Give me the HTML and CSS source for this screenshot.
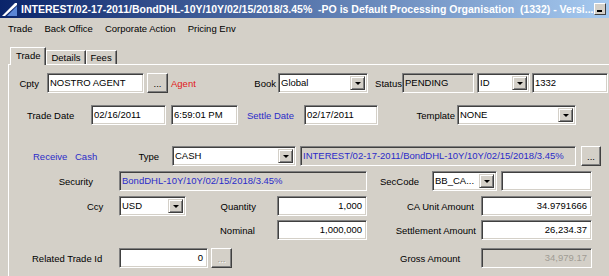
FILE: index.html
```html
<!DOCTYPE html>
<html lang="en">
<head>
  <meta charset="UTF-8">
  <title>Trade</title>
  <link rel="stylesheet" href="styles.css">
</head>
<body>
  <div class="titlebar">
    <svg class="app-icon" width="15" height="14" viewBox="0 0 15 14">
      <polygon points="0,14 13,1 15,1 15,3 3,14" fill="#ffffff"/>
      <polygon points="5,14 15,4 15,14" fill="#5b86d6"/>
    </svg>
    <span class="title-text">INTEREST/02-17-2011/BondDHL-10Y/10Y/02/15/2018/3.45%&nbsp;&nbsp;-PO is Default Processing Organisation&nbsp;&nbsp;(1332) - Versi...</span>
    <span class="min-btn"></span>
  </div>

  <div class="menubar">
    <span>Trade</span>
    <span>Back Office</span>
    <span>Corporate Action</span>
    <span>Pricing Env</span>
  </div>

  <div class="tabstrip">
    <div class="tab active">Trade</div>
    <div class="tab">Details</div>
    <div class="tab">Fees</div>
  </div>

  <div class="panel">
    <!-- counterparty / book / status -->
    <div class="row r1">
      <span class="lbl l-cpty">Cpty</span>
      <div class="field f-cpty">NOSTRO AGENT</div>
      <div class="btn b-cpty">...</div>
      <span class="lbl l-agent red">Agent</span>
      <span class="lbl l-book">Book</span>
      <div class="field combo f-book">Global<span class="arrow"></span></div>
      <span class="lbl l-status">Status</span>
      <div class="field grey f-status">PENDING</div>
      <div class="field combo f-idtype">ID<span class="arrow"></span></div>
      <div class="field f-id">1332</div>
    </div>

    <!-- dates -->
    <div class="row r2">
      <span class="lbl l-tdate">Trade Date</span>
      <div class="field f-tdate">02/16/2011</div>
      <div class="field f-time">6:59:01 PM</div>
      <span class="lbl l-sdate blue">Settle Date</span>
      <div class="field f-sdate">02/17/2011</div>
      <span class="lbl l-template">Template</span>
      <div class="field combo f-template">NONE<span class="arrow"></span></div>
    </div>

    <!-- type / product -->
    <div class="row r3">
      <span class="lbl l-receive blue">Receive</span>
      <span class="lbl l-cash blue">Cash</span>
      <span class="lbl l-type">Type</span>
      <div class="field combo f-type">CASH<span class="arrow"></span></div>
      <div class="field grey blue f-product">INTEREST/02-17-2011/BondDHL-10Y/10Y/02/15/2018/3.45%</div>
      <div class="btn b-product">...</div>
    </div>

    <div class="row r4">
      <span class="lbl l-security">Security</span>
      <div class="field grey blue f-security">BondDHL-10Y/10Y/02/15/2018/3.45%</div>
      <span class="lbl l-seccode">SecCode</span>
      <div class="field combo f-seccode">BB_CA...<span class="arrow"></span></div>
      <div class="field f-secval"></div>
    </div>

    <!-- amounts -->
    <div class="row r5">
      <span class="lbl l-ccy">Ccy</span>
      <div class="field combo f-ccy">USD<span class="arrow"></span></div>
      <span class="lbl l-qty">Quantity</span>
      <div class="field num f-qty">1,000</div>
      <span class="lbl l-caunit">CA Unit Amount</span>
      <div class="field num f-caunit">34.9791666</div>
    </div>

    <div class="row r6">
      <span class="lbl l-nominal">Nominal</span>
      <div class="field num f-nominal">1,000,000</div>
      <span class="lbl l-settle">Settlement Amount</span>
      <div class="field num f-settle">26,234.37</div>
    </div>

    <div class="row r7">
      <span class="lbl l-related">Related Trade Id</span>
      <div class="field num f-related">0</div>
      <div class="btn disabled b-related">...</div>
      <span class="lbl l-gross">Gross Amount</span>
      <div class="field grey num disabled f-gross">34,979.17</div>
    </div>
  </div>
</body>
</html>
```

FILE: styles.css
```css
body {
  margin: 0;
  background-color: #d4d0c8;
  font-family: "Liberation Sans", Arial, sans-serif;
  font-size: 9.5px;
  color: #000;
  overflow: hidden;
}

/* window chrome */
.titlebar {
  display: flex;
  align-items: center;
  height: 18px;
  padding-left: 2px;
  background: linear-gradient(to right, #0a246a, #a6caf0);
  color: #fff;
  font-size: 10.5px;
  font-weight: bold;
}
.app-icon {
  flex: none;
  margin-right: 4px;
}
.title-text {
  flex: none;
  white-space: nowrap;
}
.min-btn {
  flex: none;
  position: relative;
  width: 12px;
  height: 12px;
  margin: 0 3px 0 auto;
  background: #d4d0c8;
  box-sizing: border-box;
  border: 1px solid;
  border-color: #fff #404040 #404040 #fff;
}
.min-btn::after {
  content: "";
  position: absolute;
  left: 2px;
  bottom: 2px;
  width: 5px;
  height: 2px;
  background: #000;
}

.menubar {
  display: flex;
  gap: 12px;
  height: 20px;
  align-items: center;
  padding-left: 8px;
}

/* tabs */
.tabstrip {
  display: flex;
  align-items: flex-end;
  height: 26px;
  padding-left: 10px;
}
.tab {
  height: 13px;
  line-height: 13px;
  padding: 0 4px;
  border-top: 1px solid #fff;
  border-left: 1px solid #fff;
  border-right: 1px solid #404040;
  box-shadow: inset -1px 0 0 #808080;
}
.tab.active {
  position: relative;
  height: 17px;
  line-height: 15px;
  margin-bottom: -1px;
  padding: 0 5px;
  background: #d4d0c8;
  z-index: 1;
}

.panel {
  margin-left: 8px;
  height: 220px;
  border-top: 1px solid #fff;
  border-left: 1px solid #fff;
}

/* form rows */
.row {
  display: flex;
  align-items: center;
  height: 20px;
}
.r1 { margin-top: 8px; }
.r2 { margin-top: 12px; }
.r3 { margin-top: 21px; }
.r4 { margin-top: 5px; }
.r5 { margin-top: 5px; }
.r6 { margin-top: 4px; }
.r7 { margin-top: 8px; }

.lbl {
  flex: none;
  white-space: nowrap;
  text-align: right;
}
.red { color: #e01818; }
.blue { color: #2b2bc8; }

.field {
  flex: none;
  position: relative;
  box-sizing: border-box;
  height: 20px;
  line-height: 18px;
  padding-left: 2px;
  background: #fff;
  border: 1px solid;
  border-color: #808080 #fff #fff #808080;
  box-shadow: inset 1px 1px 0 #404040, inset -1px -1px 0 #d4d0c8;
  white-space: nowrap;
  overflow: hidden;
}
.field.grey { background: #d4d0c8; }
.field.num {
  text-align: right;
  padding-right: 4px;
}
.field.disabled { color: #a09c94; }

.combo .arrow {
  position: absolute;
  top: 2px;
  right: 2px;
  width: 15px;
  height: 14px;
  box-sizing: border-box;
  background: #d4d0c8;
  border: 1px solid;
  border-color: #d4d0c8 #404040 #404040 #d4d0c8;
  box-shadow: inset 1px 1px 0 #fff, inset -1px -1px 0 #808080;
}
.combo .arrow::after {
  content: "";
  position: absolute;
  left: 4px;
  top: 5px;
  border-left: 3px solid transparent;
  border-right: 3px solid transparent;
  border-top: 3px solid #000;
}

.btn {
  flex: none;
  box-sizing: border-box;
  width: 21px;
  height: 20px;
  line-height: 19px;
  text-align: center;
  background: #d4d0c8;
  border: 1px solid;
  border-color: #fff #404040 #404040 #fff;
  box-shadow: inset -1px -1px 0 #808080;
}
.btn.disabled {
  color: #a09c94;
  text-shadow: 1px 1px 0 #fff;
}

/* row 1 */
.l-cpty { width: 20px; margin-left: 10px; }
.f-cpty { width: 97px; margin-left: 8px; }
.b-cpty { margin-left: 3px; }
.l-agent { width: 30px; margin-left: 3px; text-align: left; }
.l-book { width: 22px; margin-left: 53px; }
.f-book { width: 90px; margin-left: 2px; }
.l-status { width: 28px; margin-left: 6px; }
.f-status { width: 72px; }
.f-idtype { width: 53px; margin-left: 3px; }
.f-id { width: 76px; margin-left: 2px; }

/* row 2 */
.l-tdate { width: 47px; margin-left: 18px; }
.f-tdate { width: 75px; margin-left: 17px; }
.f-time { width: 67px; margin-left: 5px; }
.l-sdate { width: 47px; margin-left: 9px; }
.f-sdate { width: 74px; margin-left: 10px; }
.l-template { width: 45px; margin-left: 32px; }
.f-template { width: 119px; margin-left: 2px; }

/* row 3 */
.l-receive { width: 34px; margin-left: 24px; text-align: left; }
.l-cash { width: 22px; margin-left: 8px; text-align: left; }
.l-type { width: 22px; margin-left: 40px; }
.f-type { width: 124px; margin-left: 13px; }
.f-product { width: 276px; margin-left: 4px; }
.b-product { width: 20px; margin-left: 5px; }

/* row 4 */
.l-security { width: 35px; margin-left: 49px; }
.f-security { width: 248px; margin-left: 26px; }
.l-seccode { width: 37px; margin-left: 13px; }
.f-seccode { width: 65px; margin-left: 15px; }
.f-secval { width: 91px; margin-left: 4px; }

/* row 5 */
.l-ccy { width: 16px; margin-left: 78px; }
.f-ccy { width: 67px; margin-left: 16px; }
.l-qty { width: 36px; margin-left: 34px; }
.f-qty { width: 90px; margin-left: 21px; }
.l-caunit { width: 73px; margin-left: 34px; }
.f-caunit { width: 111px; margin-left: 7px; }

/* row 6 */
.l-nominal { width: 32px; margin-left: 211px; }
.f-nominal { width: 90px; margin-left: 25px; }
.l-settle { width: 81px; margin-left: 28px; }
.f-settle { width: 111px; margin-left: 5px; }

/* row 7 */
.l-related { width: 70px; margin-left: 23px; }
.f-related { width: 89px; margin-left: 17px; }
.b-related { margin-left: 3px; }
.l-gross { width: 60px; margin-left: 168px; }
.f-gross { width: 111px; margin-left: 21px; }
```
